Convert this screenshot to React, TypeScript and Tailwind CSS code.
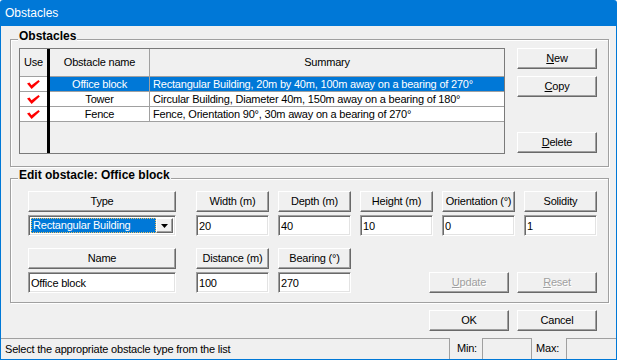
import React from 'react';

const raised =
  "border border-t-white border-l-white border-r-[#696969] border-b-[#696969] shadow-[inset_-1px_-1px_0_#a0a0a0] bg-[#f0f0f0]";
const sunken =
  "border border-t-[#a0a0a0] border-l-[#a0a0a0] border-r-white border-b-white shadow-[inset_1px_1px_0_#696969,inset_-1px_-1px_0_#e3e3e3] bg-white";
const etched = "border border-[#a0a0a0] shadow-[inset_1px_1px_0_#fff,1px_1px_0_#fff]";

const rows = [
  { name: 'Office block', summary: 'Rectangular Building, 20m by 40m, 100m away on a bearing of 270°', sel: true },
  { name: 'Tower', summary: 'Circular Building, Diameter 40m, 150m away on a bearing of 180°', sel: false },
  { name: 'Fence', summary: 'Fence, Orientation 90°, 30m away on a bearing of 270°', sel: false },
];

function Check() {
  return (
    <svg width="13" height="9" viewBox="0 0 13 9">
      <polygon points="0,3.5 2.5,2.5 4.5,5.2 11.5,0 12.8,1.6 4.6,9" fill="#ff0000" />
    </svg>
  );
}

function Btn({ label, u, disabled }: { label: string; u?: number; disabled?: boolean }) {
  const i = u ?? -1;
  return (
    <button
      className={`${raised} w-[80px] h-[21px] flex items-center justify-center ${
        disabled ? 'text-[#a0a0a0] [text-shadow:1px_1px_0_#fff]' : 'text-black'
      }`}
    >
      {i >= 0 ? (
        <span>
          {label.slice(0, i)}
          <span className="underline">{label[i]}</span>
          {label.slice(i + 1)}
        </span>
      ) : (
        label
      )}
    </button>
  );
}

function Field({ label, value, w }: { label: string; value: string; w: string }) {
  return (
    <div className={`flex flex-col gap-[3px] ${w}`}>
      <div className={`${raised} h-[21px] flex items-center justify-center`}>{label}</div>
      <input
        readOnly
        defaultValue={value}
        className={`${sunken} h-[21px] px-[2px] outline-none text-[11px] tracking-[-0.2px] w-full`}
      />
    </div>
  );
}

export default function App() {
  return (
    <div className="w-[617px] h-[360px] bg-[#0078d7] flex flex-col rounded-t-[3px] font-['Liberation_Sans',Arial,sans-serif] text-[11px] tracking-[-0.2px] text-black">
      <div className="h-[26px] flex items-center pl-[5px] text-[12px] tracking-normal text-white">Obstacles</div>

      <div className="flex-1 mx-[1px] mb-[1px] bg-[#f0f0f0] flex flex-col">
        {/* Obstacles list */}
        <div className={`relative mt-[13px] ml-[9px] w-[599px] h-[128px] ${etched} flex pt-[8px] pl-[8px]`}>
          <span className="absolute top-[-10px] left-[7px] px-[1px] bg-[#f0f0f0] font-bold text-[12px] tracking-normal leading-[13px]">
            Obstacles
          </span>

          <div className="flex w-[486px] h-[106px] border border-[#7a7a7a] bg-[#f0f0f0]">
            <div className="w-[27px] flex flex-col">
              <div className="h-[28px] border-b border-[#a0a0a0] flex items-center justify-center">Use</div>
              {rows.map(r => (
                <div key={r.name} className="h-[15px] border-b border-[#a0a0a0] bg-white flex items-center justify-center">
                  <Check />
                </div>
              ))}
            </div>
            <div className="w-[3px] bg-black" />
            <div className="flex-1 flex flex-col">
              <div className="h-[28px] flex border-b border-[#a0a0a0]">
                <div className="w-[100px] border-r border-[#a0a0a0] flex items-center justify-center">Obstacle name</div>
                <div className="flex-1 flex items-center justify-center">Summary</div>
              </div>
              {rows.map(r => (
                <div
                  key={r.name}
                  className={`h-[15px] flex border-b border-[#a0a0a0] ${r.sel ? 'bg-[#0078d7] text-white' : 'bg-white'}`}
                >
                  <div className="w-[100px] border-r border-[#a0a0a0] flex items-center justify-center leading-none">
                    {r.name}
                  </div>
                  <div className="flex-1 flex items-center pl-[3px] leading-none whitespace-nowrap">{r.summary}</div>
                </div>
              ))}
            </div>
          </div>

          <div className="ml-[12px] flex flex-col">
            <Btn label="New" u={0} />
            <div className="mt-[7px]">
              <Btn label="Copy" u={0} />
            </div>
            <div className="mt-[35px]">
              <Btn label="Delete" u={0} />
            </div>
          </div>
        </div>

        {/* Edit obstacle */}
        <div className={`relative mt-[11px] ml-[9px] w-[599px] h-[125px] ${etched} pt-[12px] pl-[17px] flex flex-col gap-[12px]`}>
          <span className="absolute top-[-10px] left-[7px] px-[1px] bg-[#f0f0f0] font-bold text-[12px] tracking-normal leading-[13px]">
            Edit obstacle: Office block
          </span>

          <div className="flex">
            <div className="flex flex-col gap-[3px] w-[148px]">
              <div className={`${raised} h-[21px] flex items-center justify-center`}>Type</div>
              <div className={`${sunken} h-[21px] flex items-center p-[2px]`}>
                <div className="flex-1 h-full bg-[#0078d7] text-white flex items-center pl-[2px] outline-1 outline-dotted outline-[#f0c060] -outline-offset-1 whitespace-nowrap">
                  Rectangular Building
                </div>
                <div className={`${raised} w-[17px] h-full flex items-center justify-center`}>
                  <svg width="7" height="4" viewBox="0 0 7 4">
                    <polygon points="0,0 7,0 3.5,4" fill="#000" />
                  </svg>
                </div>
              </div>
            </div>
            <div className="ml-[20px] flex gap-[9px]">
              <Field label="Width (m)" value="20" w="w-[73px]" />
              <Field label="Depth (m)" value="40" w="w-[73px]" />
              <Field label="Height (m)" value="10" w="w-[73px]" />
              <Field label="Orientation (°)" value="0" w="w-[73px]" />
              <Field label="Solidity" value="1" w="w-[73px]" />
            </div>
          </div>

          <div className="flex">
            <Field label="Name" value="Office block" w="w-[148px]" />
            <div className="ml-[20px] flex gap-[9px]">
              <Field label="Distance (m)" value="100" w="w-[73px]" />
              <Field label="Bearing (°)" value="270" w="w-[73px]" />
            </div>
            <div className="ml-[78px] mt-[24px] flex gap-[8px]">
              <Btn label="Update" u={0} disabled />
              <Btn label="Reset" u={0} disabled />
            </div>
          </div>
        </div>

        {/* OK / Cancel */}
        <div className="mt-[7px] pl-[428px] flex gap-[8px]">
          <Btn label="OK" />
          <Btn label="Cancel" />
        </div>

        {/* Status bar */}
        <div className="mt-[7px] h-[21px] flex items-stretch">
          <div className="w-[449px] border-t border-r border-[#a0a0a0] flex items-center pl-[4px]">
            Select the appropriate obstacle type from the list
          </div>
          <div className="w-[32px] flex items-center pl-[7px]">Min:</div>
          <div className="w-[50px] border-t border-l border-r border-[#a0a0a0]" />
          <div className="w-[34px] flex items-center pl-[4px]">Max:</div>
          <div className="flex-1 border-t border-l border-[#a0a0a0]" />
        </div>
      </div>
    </div>
  );
}
